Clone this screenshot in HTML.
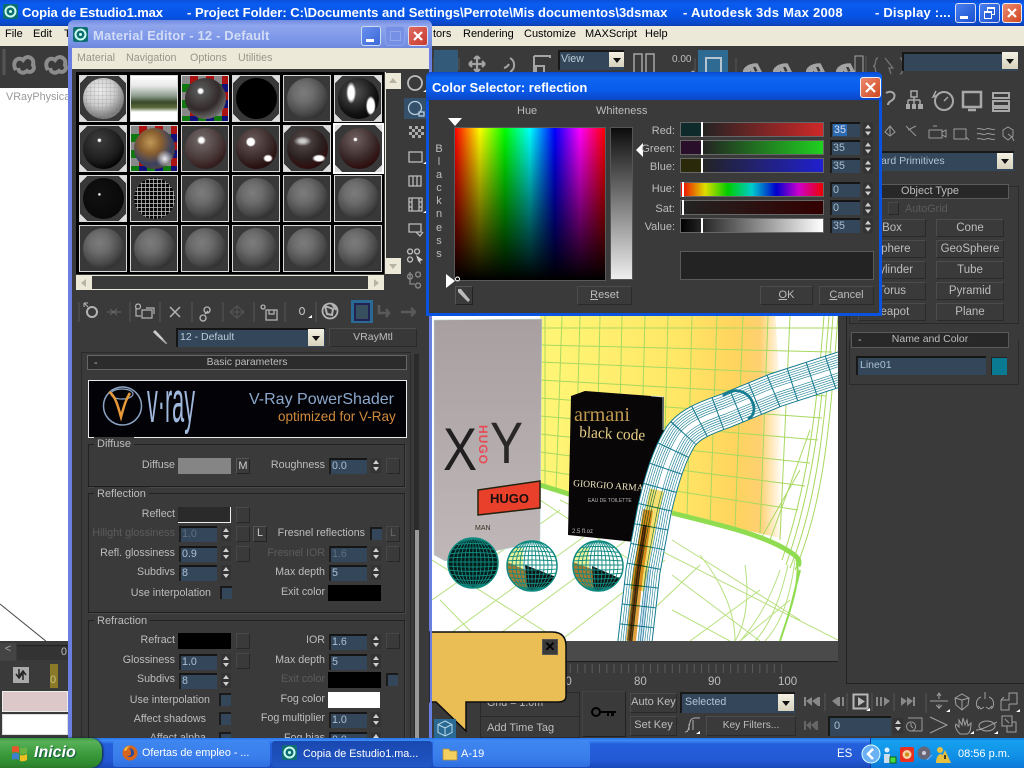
<!DOCTYPE html>
<html><head><meta charset="utf-8"><style>
html,body{margin:0;padding:0;width:1024px;height:768px;overflow:hidden;background:#3a3a3a}
body{position:relative;font-family:"Liberation Sans",sans-serif;font-size:10.7px;color:#bdbdbd}
.a,.t,.b,.i,.c,.s,.o,.g,.h{position:absolute;box-sizing:border-box}
.t{white-space:nowrap;line-height:14px}
.d{color:#5c5c5c}
.b{border:1px solid #2a2a2a;border-top-color:#4c4c4c;border-left-color:#4c4c4c;background:#3a3a3a;text-align:center;line-height:17px;white-space:nowrap;color:#bdbdbd}
.i{background:#34465a;border-top:2px solid #151515;border-left:2px solid #1c1c1c;color:#a8c0d4;padding-left:1px;line-height:13px;width:38px;height:16px}
.c{width:12px;height:13px;background:#34465a;border-top:2px solid #1a1a1a;border-left:2px solid #1a1a1a}
.s{width:14px;height:16px;border:1px solid #484848;border-right-color:#272727;border-bottom-color:#272727;background:#3a3a3a}
.g{border:1px solid #222;border-bottom-color:#1e1e1e;box-shadow:1px 1px 0 #484848}
.h{background:#282828;border:1px solid #5a5a5a;text-align:center;line-height:13px}
.o{width:48px;height:47px;background:#383838;border:1px solid #d8d8d8;overflow:hidden}
.o i{position:absolute;left:3px;top:2px;width:41px;height:41px;border-radius:50%;display:block;background:radial-gradient(circle at 40% 36%,#7c7c7c 0,#6c6c6c 28%,#4a4a4a 58%,#2c2c2c 78%,#464646 92%,#333 100%)}
.k{background:linear-gradient(135deg,#ddd 5px,transparent 5px),linear-gradient(225deg,#ddd 5px,transparent 5px),linear-gradient(45deg,#ddd 5px,transparent 5px),linear-gradient(315deg,#ddd 5px,transparent 5px),#383838}
.ar{background:linear-gradient(#f4f1e4,#d6d2bc)}
.ar:after{content:"";position:absolute;left:50%;top:50%;margin:-2px 0 0 -4px;border:4px solid transparent;border-top:5px solid #111;border-bottom:0}
.ck{background:conic-gradient(#a11 25%,#117 0 50%,#171 0 75%,#888 0) 0 0/16px 16px}
svg{position:absolute;overflow:visible}
</style></head><body>
<svg width="0" height="0" style="left:0;top:0"><defs>
<symbol id="sp" viewBox="0 0 10 15"><rect width="10" height="15" fill="#333"/><path d="M5 2l3 4H2zM5 13l3-4H2z" fill="#cfcfcf"/></symbol>
</defs></svg>

<!-- title bar -->
<div class="a" style="left:0;top:0;width:1024px;height:26px;background:linear-gradient(#0a4fd8,#0a5cf0 15%,#0654e6 60%,#0a48c8 90%,#0a3fb0)"></div>
<svg style="left:3px;top:3px" width="16" height="18"><rect x="0" y="1" width="15" height="15" rx="2" fill="#0d6e70"/><circle cx="7.500" cy="8.500" r="5" fill="none" stroke="#cfe" stroke-width="2"/><circle cx="7.500" cy="8.500" r="1.500" fill="#cfe"/></svg>
<div class="t" style="left:22px;top:5px;font:bold 13px/16px 'Liberation Sans';color:#fff;letter-spacing:-.1px">Copia de Estudio1.max</div>
<div class="t" style="left:187px;top:5px;font:bold 13px/16px 'Liberation Sans';color:#fff">- Project Folder: C:\Documents and Settings\Perrote\Mis documentos\3dsmax</div>
<div class="t" style="left:683px;top:5px;font:bold 13px/16px 'Liberation Sans';letter-spacing:.25px;color:#fff">- Autodesk 3ds Max 2008</div>
<div class="t" style="left:875px;top:5px;font:bold 13px/16px 'Liberation Sans';letter-spacing:.2px;color:#fff">- Display :...</div>
<div class="a" style="left:955px;top:3px;width:21px;height:20px;border:1px solid #dde;border-radius:3px;background:linear-gradient(135deg,#4a80ee,#1a50d0)"><div class="a" style="left:4px;top:12px;width:8px;height:3px;background:#fff"></div></div>
<div class="a" style="left:979px;top:3px;width:21px;height:20px;border:1px solid #dde;border-radius:3px;background:linear-gradient(135deg,#4a80ee,#1a50d0)"><div class="a" style="left:7px;top:3px;width:8px;height:8px;border:1px solid #fff;border-top-width:2px"></div><div class="a" style="left:4px;top:7px;width:8px;height:8px;border:1px solid #fff;border-top-width:2px;background:#2a60d8"></div></div>
<div class="a" style="left:1002px;top:3px;width:20px;height:20px;border:1px solid #eee;border-radius:3px;background:linear-gradient(135deg,#ec8a70,#d04820)"><svg style="left:3px;top:3px" width="12" height="12"><path d="M2 2l8 8M10 2l-8 8" stroke="#fff" stroke-width="2.200"/></svg></div>

<!-- menu bar -->
<div class="a" style="left:0;top:26px;width:1024px;height:20px;background:#ece9d8"></div>
<div class="t" style="left:5px;top:27px;color:#000;font-size:11px">File</div>
<div class="t" style="left:33px;top:27px;color:#000;font-size:11px">Edit</div>
<div class="t" style="left:64px;top:27px;color:#000;font-size:11px">T</div>
<div class="t" style="left:433px;top:27px;color:#000;font-size:11px">tors</div>
<div class="t" style="left:463px;top:27px;color:#000;font-size:11px">Rendering</div>
<div class="t" style="left:524px;top:27px;color:#000;font-size:11px">Customize</div>
<div class="t" style="left:585px;top:27px;color:#000;font-size:11px">MAXScript</div>
<div class="t" style="left:645px;top:27px;color:#000;font-size:11px">Help</div>

<!-- top toolbar -->
<div class="a" style="left:0;top:46px;width:1024px;height:42px;background:#3a3a3a"></div>
<svg style="left:0;top:46px" width="1024" height="40" fill="none" stroke="#a4a4a4" stroke-width="2">
<path d="M4 3v26" stroke="#555" stroke-width="3"/>
<g stroke-width="4" stroke="#8c8c8c"><path d="M16 24c-5-8 2-14 7-10 4-6 12-2 10 5 3 4-2 9-6 6-4 3-8 2-9-3"/><path d="M48 24c-5-8 2-14 7-10 4-6 12-2 10 5 3 4-2 9-6 6-4 3-8 2-9-3"/></g>
<path d="M477 10v16M469 18h16M477 10l-3 3M477 10l3 3M477 26l-3-3M477 26l3-3M469 18l3-3M469 18l3 3M485 18l-3-3M485 18l-3 3" stroke-width="2.200"/>
<path d="M510 12a8 8 0 0 1 0 14M504 22a8 8 0 0 0 5-4" stroke-width="2"/>
<path d="M534 10h16v2M534 10v20h6M536 20h8v8h-8z"/>
<path d="M634 8h8v22h-8zM646 8h8v22h-8z" stroke-width="1.500"/>
<path d="M673 27h5M678 27h12M690 27l3-2 3 2-3 2z" stroke-width="1"/>
<path d="M745 28c-2-5 4-9 12-9M756 18l4 8-6 2-2-5c-2 0-4 1-4 3l3 3-5 2" stroke-width="3.500"/>
<path d="M775 28c-2-5 4-9 12-9M786 18l4 8-6 2-2-5c-2 0-4 1-4 3l3 3-5 2" stroke-width="3.500"/>
<path d="M808 28c-2-5 4-9 12-9M819 18l4 8-6 2-2-5c-2 0-4 1-4 3l3 3-5 2" stroke-width="3.500"/>
<path d="M838 28c-2-5 4-9 12-9M849 18l4 8-6 2-2-5c-2 0-4 1-4 3l3 3-5 2" stroke-width="3.500"/>
<path d="M855 10h8v18h-8z" stroke-width="1"/>
<path d="M878 12c-4 0-1 8-5 8 4 0 1 8 5 8M900 12c4 0 1 8 5 8-4 0-1 8-5 8M885 12l8 10-4 0 2 6" stroke-width="1.200" stroke="#777"/>
<path d="M459 12v12M434 12v14M695 12v14M736 12v14M866 10v20" stroke="#555" stroke-width="1"/>
</svg>
<div class="a" style="left:434px;top:50px;width:24px;height:25px;background:#345a7a"></div>
<div class="a" style="left:558px;top:50px;width:66px;height:20px;background:#34465a;border-top:2px solid #181818;border-left:2px solid #181818;padding-left:1px;line-height:14px;color:#b8ccd8">View</div>
<div class="a ar" style="left:609px;top:52px;width:15px;height:15px"></div>
<div class="t" style="left:672px;top:53px;font-size:10px">0.00</div>
<div class="a" style="left:698px;top:50px;width:30px;height:25px;background:#2f6a92"></div>
<div class="a" style="left:705px;top:57px;width:17px;height:18px;border:2px solid #b4c4d0"></div>
<div class="a" style="left:902px;top:52px;width:116px;height:19px;background:#34465a;border-top:2px solid #181818;border-left:2px solid #181818"></div>
<div class="a ar" style="left:1002px;top:52px;width:16px;height:17px"></div>

<!-- left viewport -->
<div class="a" style="left:0;top:88px;width:68px;height:553px;background:#fff"></div>
<div class="t" style="left:6px;top:90px;color:#999;font-size:10.800px">VRayPhysica</div>
<svg style="left:0;top:600px" width="68" height="45"><path d="M0 4L47 42" stroke="#444" stroke-width="1" fill="none"/></svg>
<div class="a" style="left:0;top:643px;width:16px;height:18px;background:#444;color:#aaa;text-align:center">&lt;</div>
<div class="a" style="left:17px;top:645px;width:51px;height:15px;background:#333;border-top:1px solid #222"></div>
<div class="t" style="left:61px;top:645px">0</div>
<div class="a" style="left:13px;top:667px;width:16px;height:16px;background:#aaa"></div>
<svg style="left:15px;top:668px" width="12" height="13"><path d="M4 1v8M1 6l3 4 3-4M8 12V4M5 7l3-4 3 4" stroke="#222" stroke-width="1.500" fill="none"/></svg>
<div class="a" style="left:50px;top:664px;width:8px;height:24px;background:#8a7a28"></div>
<div class="t" style="left:50px;top:673px;color:#c8c080;font-size:11px">0</div>
<div class="a" style="left:2px;top:691px;width:66px;height:21px;background:#dcc8c8;border:1px solid #eee"></div>
<div class="a" style="left:2px;top:714px;width:66px;height:21px;background:#fff;border:1px solid #ddd"></div>

<!-- scene -->
<div class="a" style="left:432px;top:300px;width:406px;height:341px;background:#fff;overflow:hidden">
<svg style="left:0;top:0" width="406" height="341" viewBox="432 300 406 341">
<defs>
<linearGradient id="wl" x1="0" x2="1" y1="0" y2="0"><stop offset="0" stop-color="#fff676"/><stop offset=".55" stop-color="#ffe766"/><stop offset=".78" stop-color="#ffd45e"/><stop offset=".88" stop-color="#ffd070"/><stop offset=".97" stop-color="#fff"/></linearGradient>
<linearGradient id="bx" x1="0" x2="0" y1="0" y2="1"><stop offset="0" stop-color="#a8a0a0"/><stop offset="1" stop-color="#c0b8b8"/></linearGradient>
<clipPath id="s1"><circle cx="473" cy="563" r="25"/></clipPath>
<clipPath id="s2"><circle cx="532" cy="566" r="25"/></clipPath>
<clipPath id="s3"><circle cx="598" cy="566" r="25"/></clipPath>
<g id="wire" fill="none" stroke="#108a80" stroke-width=".9">
<path d="M-26-21Q0-27 26-21M-26-17Q0-22 26-17M-26-13Q0-17 26-13M-26-9Q0-12 26-9M-26-5Q0-7 26-5M-26-1H26M-26 3Q0 5 26 3M-26 7Q0 10 26 7M-26 11Q0 15 26 11M-26 15Q0 20 26 15M-26 19Q0 25 26 19"/>
<ellipse rx="4" ry="25"/><ellipse rx="8" ry="25"/><ellipse rx="12" ry="25"/><ellipse rx="16" ry="25"/><ellipse rx="20" ry="25"/><path d="M0-25V25"/>
</g>
</defs>
<path d="M540 310H775L790 540 540 485Z" fill="url(#wl)"/>
<g fill="none" stroke="#a8d860" stroke-width="1">
<path d="M545 316V488M562 316L556 491M580 316L575 495M600 316L596 500M622 316L618 504M645 316L640 508M668 316L663 513M692 316L687 518M717 316L710 524M743 316L735 528M768 316L760 534M790 316L780 540"/>
<path d="M540 328H838M540 345L832 352M540 362L832 375M540 380L826 396M540 398L822 418M540 416L818 440M540 434L810 463M540 452L805 486M540 470L798 510"/>
<path d="M838 316C830 420 825 500 795 570M833 316C825 420 818 500 790 568M829 316C821 420 812 490 786 565M824 316C816 420 806 490 782 560"/>
<path d="M800 470L760 540M810 430L770 540"/>
</g>
<path d="M540 485L572 495M672 513C720 525 765 535 790 552C800 558 800 562 798 566" fill="none" stroke="#90dc50" stroke-width="5"/>
<g fill="none" stroke="#b8e080" stroke-width="1">
<path d="M432 600L560 510M440 641L600 525M490 641L640 530M560 641L665 560M620 641L700 565M690 641L760 590M740 641L790 600"/>
<path d="M540 500L630 560M560 500L838 640M672 540L800 620M672 575L760 641M672 610L730 641M440 600L480 641M432 560L560 641"/>
<path d="M795 560C790 600 780 625 765 641M788 565C780 600 770 625 755 641M780 570C770 600 755 625 740 641M745 565C750 600 745 625 735 641M700 555C720 580 735 610 735 641"/>
</g>
<path d="M800 570L790 610M796 555C802 580 790 610 780 641" fill="none" stroke="#90dc50" stroke-width="2"/>
<path d="M434 320L542 319 540 542 445 561 434 555Z" fill="url(#bx)" stroke="#b8e0e0" stroke-width=".5"/>
<text x="443" y="470" font-family="Liberation Sans" font-size="60" fill="#211f1f" textLength="34" lengthAdjust="spacingAndGlyphs">X</text>
<text x="490" y="463" font-family="Liberation Sans" font-size="58" fill="#2a2727" textLength="33" lengthAdjust="spacingAndGlyphs">Y</text>
<text x="0" y="0" transform="translate(479,425) rotate(90)" font-family="Liberation Sans" font-weight="bold" font-size="12" letter-spacing="1" fill="#e84a55">HUGO</text>
<path d="M478 490L540 481V508L478 515Z" fill="#e8402a" stroke="#221" stroke-width="1.500"/>
<text x="490" y="503" font-family="Liberation Sans" font-weight="bold" font-size="13" fill="#1a1010">HUGO</text>
<text x="475" y="530" font-family="Liberation Sans" font-size="7" fill="#332">MAN</text>
<path d="M571 396L585 391 664 397 663 545 568 535Z" fill="#080606"/>
<path d="M651 396L663 397 663 430" stroke="#bde" fill="none" stroke-width=".8"/>
<text x="574" y="421" font-family="Liberation Serif" font-size="20" fill="#c09a50" textLength="56" lengthAdjust="spacingAndGlyphs">armani</text>
<text x="579" y="437" font-family="Liberation Serif" font-size="16" fill="#e8d088" transform="rotate(3 579 437)" textLength="66" lengthAdjust="spacingAndGlyphs">black code</text>
<text x="573" y="486" font-family="Liberation Serif" font-size="9.500" fill="#f0e8c0" transform="rotate(4 573 486)">GIORGIO ARMANI</text>
<text x="588" y="502" font-family="Liberation Sans" font-size="5" fill="#bbb">EAU DE TOILETTE</text>
<text x="572" y="533" font-family="Liberation Sans" font-size="6" fill="#bbb">2.5 fl.oz</text>
<!-- tube -->
<g fill="none">
<path d="M850 366L776 390L725 411C705 418 690 424 681 436C668 456 660 485 654 512L643 571L634 650" stroke="#127a8e" stroke-width="35"/>
<path d="M850 366L776 390L725 411C705 418 690 424 681 436C668 456 660 485 654 512L643 571L634 650" stroke="#fff" stroke-width="33"/>
<path d="M850 366L776 390L725 411C705 418 690 424 681 436C668 456 660 485 654 512L643 571L634 650" stroke="#127a8e" stroke-width="29"/>
<path d="M850 366L776 390L725 411C705 418 690 424 681 436C668 456 660 485 654 512L643 571L634 650" stroke="#fff" stroke-width="27.800"/>
<path d="M850 366L776 390L725 411C705 418 690 424 681 436C668 456 660 485 654 512L643 571L634 650" stroke="#127a8e" stroke-width="24.500"/>
<path d="M850 366L776 390L725 411C705 418 690 424 681 436C668 456 660 485 654 512L643 571L634 650" stroke="#fff" stroke-width="23.300"/>
<path d="M850 366L776 390L725 411C705 418 690 424 681 436C668 456 660 485 654 512L643 571L634 650" stroke="#127a8e" stroke-width="20"/>
<path d="M850 366L776 390L725 411C705 418 690 424 681 436C668 456 660 485 654 512L643 571L634 650" stroke="#fff" stroke-width="18.800"/>
<path d="M850 366L776 390L725 411C705 418 690 424 681 436C668 456 660 485 654 512L643 571L634 650" stroke="#127a8e" stroke-width="15.500"/>
<path d="M850 366L776 390L725 411C705 418 690 424 681 436C668 456 660 485 654 512L643 571L634 650" stroke="#fff" stroke-width="14.300"/>
<path d="M850 366L776 390L725 411C705 418 690 424 681 436C668 456 660 485 654 512L643 571L634 650" stroke="#127a8e" stroke-width="11"/>
<path d="M850 366L776 390L725 411C705 418 690 424 681 436C668 456 660 485 654 512L643 571L634 650" stroke="#fff" stroke-width="9.800"/>
<path d="M850 366L776 390L725 411C705 418 690 424 681 436C668 456 660 485 654 512L643 571L634 650" stroke="#127a8e" stroke-width="6.500"/>
<path d="M850 366L776 390L725 411C705 418 690 424 681 436C668 456 660 485 654 512L643 571L634 650" stroke="#fff" stroke-width="5.300"/>
<path d="M850 366L776 390L725 411C705 418 690 424 681 436C668 456 660 485 654 512L643 571L634 650" stroke="#127a8e" stroke-width="34" stroke-dasharray="1 19"/>
<path d="M657 490L648 530L637 590" stroke="#f4e070" stroke-width="14" style="mix-blend-mode:multiply"/>
<path d="M648 510L638 575L631 641" stroke="#e0a040" stroke-width="10" style="mix-blend-mode:multiply"/>
<path d="M645 525L637 580L630 641" stroke="#7a5a30" stroke-width="4" style="mix-blend-mode:multiply"/>
<path d="M648 570L641 641" stroke="#c8e0f0" stroke-width="5" style="mix-blend-mode:multiply"/>
</g>
<path d="M723 396C735 385 752 392 754 408C754 414 752 417 748 419" fill="none" stroke="#157d90" stroke-width="2.800"/>
<!-- spheres -->
<circle cx="473" cy="563" r="25.500" fill="#041c1a"/>
<g clip-path="url(#s1)"><use href="#wire" x="473" y="563"/></g>
<circle cx="473" cy="563" r="25" fill="none" stroke="#108a80" stroke-width="1.500"/>
<g clip-path="url(#s2)"><rect x="505" y="540" width="54" height="54" fill="#fff"/><rect x="507" y="548" width="16" height="24" fill="#e8f080" opacity=".8"/><path d="M507 562L530 572 548 592H507Z" fill="#a87a30"/><path d="M525 565L559 578V594H528Z" fill="#111"/><use href="#wire" x="532" y="566"/></g>
<circle cx="532" cy="566" r="25" fill="none" stroke="#108a80" stroke-width="1.500"/>
<g clip-path="url(#s3)"><rect x="570" y="540" width="54" height="54" fill="#fff"/><rect x="573" y="548" width="16" height="24" fill="#e8f080" opacity=".8"/><path d="M573 562L600 572 620 592H575Z" fill="#a87a30"/><path d="M592 566L624 580V594H594Z" fill="#111"/><use href="#wire" x="598" y="566"/></g>
<circle cx="598" cy="566" r="25" fill="none" stroke="#108a80" stroke-width="1.500"/>
</svg></div>
<div class="a" style="left:838px;top:88px;width:7px;height:560px;background:#3a3a3a"></div>

<!-- bottom of view: timeline -->
<div class="a" style="left:432px;top:641px;width:406px;height:21px;background:#4a4a4a;border-bottom:1px solid #1e1e1e"></div>
<div class="a" style="left:432px;top:662px;width:412px;height:77px;background:#3a3a3a"></div>
<svg style="left:560px;top:663px" width="240" height="14"><path d="M3 1v9M10.300 1v9M17.600 1v9M25 1v9M32.200 1v9M39.500 1v9M46.800 1v9M54 1v9M61.300 1v9M68.600 1v9M76 1v9M83.200 1v9M90.500 1v9M97.800 1v9M105 1v9M112.300 1v9M119.600 1v9M127 1v9M134.200 1v9M141.500 1v9M148.800 1v9M156 1v9M163.300 1v9M170.600 1v9M178 1v9M185.200 1v9M192.500 1v9M199.800 1v9M207 1v9M214.300 1v9M221.600 1v9" stroke="#5a5a5a" fill="none"/></svg>
<div class="t" style="left:559px;top:675px;font-size:11.500px">70</div>
<div class="t" style="left:634px;top:675px;font-size:11.500px">80</div>
<div class="t" style="left:708px;top:675px;font-size:11.500px">90</div>
<div class="t" style="left:778px;top:675px;font-size:11.500px">100</div>

<div class="a" style="left:480px;top:692px;width:100px;height:46px;background:#3a3a3a;border:1px solid #2a2a2a"></div>
<div class="t" style="left:487px;top:696px">Grid = 1.0m</div>
<div class="a" style="left:481px;top:716px;width:98px;height:1px;background:#2a2a2a"></div>
<div class="t" style="left:487px;top:721px;font-size:11px">Add Time Tag</div>
<div class="b" style="left:582px;top:691px;width:44px;height:46px;border-color:#444 #222 #222 #444"></div>
<svg style="left:591px;top:705px" width="28" height="14"><circle cx="5" cy="7" r="4" fill="none" stroke="#000" stroke-width="2"/><path d="M9 6h16v2h-2v3h-3V8h-2v3h-2V8H9z" fill="#000"/></svg>
<div class="b" style="left:630px;top:693px;width:47px;height:20px;font-size:11px">Auto Key</div>
<div class="b" style="left:630px;top:716px;width:47px;height:20px;font-size:11px">Set Key</div>
<div class="a" style="left:680px;top:692px;width:115px;height:21px;background:#34465a;border-top:2px solid #181818;border-left:2px solid #181818;padding-left:3px;line-height:16px;color:#b0c4d4;font-size:10.600px">Selected</div>
<div class="a ar" style="left:778px;top:694px;width:16px;height:17px"></div>
<div class="b" style="left:706px;top:716px;width:90px;height:20px;font-size:10.200px">Key Filters...</div>
<svg style="left:682px;top:716px" width="22" height="20" fill="none" stroke="#b0b0b0"><path d="M3 16c3 0 3-1 5-10 1-5 6-4 10-4"/><path d="M7 14V8M11 14V4" stroke-width="1"/><path d="M14 18l4-3v3z" fill="#fff" stroke="none"/></svg>

<!-- transport -->
<svg style="left:800px;top:690px" width="224" height="48" fill="#7c7c7c" stroke="none">
<path d="M4 7h2v9H4zM6 11l6-4v9zM12 11l6-4v9zM18 7h2v9h-2z" fill="#888"/>
<path d="M32 11l6-4v9zM38 7h2v9h-2zM42 7h2v9h-2z" fill="#888"/>
<rect x="53.500" y="4.500" width="14" height="14" fill="none" stroke="#b8b8b8" stroke-width="2"/><path d="M58 7l7 4.500-7 4.500z" fill="#b8b8b8"/><path d="M66 21l4-3v3z" fill="#fff"/>
<path d="M76 7h2v9h-2zM80 7h2v9h-2zM84 7l6 4-6 5z" fill="#888"/>
<path d="M101 7l6 4-6 5zM107 7l6 4-6 5zM113 7h2v9h-2z" fill="#888"/>
<path d="M4 31h2v9H4zM6 35l5-4v9zM11 35l5-4v9zM16 31h2v9h-2z" fill="#666"/>
<g fill="none" stroke="#a0a0a0"><path d="M126 3v20M25 3v18M47 3v18M72 3v18M94 3v18" stroke="#555"/>
<path d="M130 11h18M139 3v6M137 6l2-3 2 3M139 14v5M136 15l3 3 3-3"/><path d="M146 22l4-3v3z" fill="#fff" stroke="none"/>
<path d="M155 8l7-4 7 4-1 7-6 5-6-5zM162 10l-7-2M162 10l7-2M162 10v10"/>
<path d="M181 7a7 7 0 0 0-2 12M189 7a7 7 0 0 1 2 12M185 2v7M178 16l3 3 3-2M192 16l-3 3-3-2"/>
<path d="M201 10h8v-7h8v11h-8M201 10v10h8v-6M201 10l3-3"/><path d="M216 22l4-3v3z" fill="#fff" stroke="none"/>
<path d="M108 28h14v13h-11M111 32a4.500 4.500 0 1 0 .1 0M111 33v3l2 2" stroke="#999"/>
<path d="M130 27l17 8-17 8"/>
<path d="M160 44c-5-5-5-9-4-10l3 3v-7l3 5 1-7 2 7 2-5 1 6 3-3c0 6-1 10-4 11z"/><path d="M170 44l4-3v3z" fill="#fff" stroke="none"/>
<path d="M179 36a8 5 0 1 0 16 0a8 5 0 1 0-16 0M176 40c6 0 14-5 21-8"/><path d="M194 44l4-3v3z" fill="#fff" stroke="none"/>
<path d="M202 26h10v10h-10zM207 36v6h9V32h-4M205 29l4 4"/></g>
</svg>
<div class="a" style="left:828px;top:716px;width:63px;height:20px;background:#34465a;border-top:2px solid #181818;border-left:2px solid #181818;padding-left:4px;line-height:16px;color:#a8c0d4;font-size:11px">0</div>
<svg style="left:893px;top:717px" width="10" height="17"><use href="#sp"/></svg>

<!-- right panel -->
<div class="a" style="left:845px;top:88px;width:179px;height:560px;background:#3a3a3a"></div>
<div class="a" style="left:846px;top:95px;width:1px;height:588px;background:#222"></div>
<div class="a" style="left:846px;top:683px;width:178px;height:1px;background:#222"></div>
<svg style="left:880px;top:88px" width="144" height="60" fill="none" stroke="#a8a8a8" stroke-width="2">
<path d="M6 5c5-3 10 0 8 5-1 3-6 3-6 7"/>
<path d="M31 3h6v6h-6zM34 9v3M28 12h12M28 12v4M34 12v4M40 12v4" stroke-width="1.500"/><path d="M26 16h4v5h-4zM32 16h4v5h-4zM38 16h5v5h-5z" fill="#a8a8a8" stroke="none"/>
<circle cx="64" cy="13" r="9"/><path d="M58 7l-5 2 3-6M64 13l4-4" stroke-width="1.500"/>
<path d="M83 4h18v15H83zM88 22h8" stroke-width="2.500"/>
<path d="M113 5h16v5h-16zM113 13h16v5h-16zM113 20h16v3h-16z"/>
<g stroke-width="1" stroke="#999"><path d="M10 38l-5 6 5 4 5-4zM10 38v10"/><path d="M26 38l10 10M36 38l-8 4"/><path d="M49 42h13v8H49zM62 44l4-2v7l-4-2M53 38h4"/><path d="M74 41h12v10H74zM86 49l3 3"/><path d="M97 41c3-2 6 2 9 0s6 2 9 0M97 46c3-2 6 2 9 0s6 2 9 0M97 51c3-2 6 2 9 0s6 2 9 0"/><path d="M123 42l5-3 5 3v6l-5 4-5-4zM128 46l4 3 2 4"/></g>
</svg>
<div class="a" style="left:880px;top:151px;width:134px;height:20px;background:#34465a;border-top:2px solid #181818;padding-left:1px;line-height:17px;color:#b0c4d4;font-size:10.500px">ard Primitives</div>
<div class="a ar" style="left:997px;top:153px;width:16px;height:16px"></div>
<div class="a" style="left:849px;top:186px;width:170px;height:138px;border:1px solid #2a2a2a"></div>
<div class="h" style="left:851px;top:184px;width:158px;height:15px;font-size:10.900px">Object Type</div>
<div class="t d" style="left:905px;top:202px;font-size:10.800px">AutoGrid</div>
<div class="s" style="left:888px;top:202px;width:11px;height:13px"></div>
<div class="b" style="left:858px;top:219px;width:68px;height:18px;font-size:11.500px">Box</div><div class="b" style="left:936px;top:219px;width:68px;height:18px;font-size:11.500px">Cone</div>
<div class="b" style="left:858px;top:240px;width:68px;height:18px;font-size:11.500px">Sphere</div><div class="b" style="left:936px;top:240px;width:68px;height:18px;font-size:11.500px">GeoSphere</div>
<div class="b" style="left:858px;top:261px;width:68px;height:18px;font-size:11.500px">Cylinder</div><div class="b" style="left:936px;top:261px;width:68px;height:18px;font-size:11.500px">Tube</div>
<div class="b" style="left:858px;top:282px;width:68px;height:18px;font-size:11.500px">Torus</div><div class="b" style="left:936px;top:282px;width:68px;height:18px;font-size:11.500px">Pyramid</div>
<div class="b" style="left:858px;top:303px;width:68px;height:18px;font-size:11.500px">Teapot</div><div class="b" style="left:936px;top:303px;width:68px;height:18px;font-size:11.500px">Plane</div>
<div class="h" style="left:851px;top:332px;width:158px;height:16px;font-size:10.500px">Name and Color</div>
<div class="t" style="left:858px;top:333px">-</div>
<div class="a" style="left:849px;top:340px;width:170px;height:45px;border:1px solid #2a2a2a;border-top:0"></div>
<div class="a" style="left:856px;top:356px;width:130px;height:19px;background:#34465a;border-top:2px solid #151515;border-left:2px solid #181818;padding-left:2px;line-height:15px;color:#a8c0d4;font-size:10.500px">Line01</div>
<div class="a" style="left:991px;top:357px;width:16px;height:18px;background:#0a7a93;border-top:1px solid #222;border-left:1px solid #222"></div>

<!-- MATERIAL EDITOR -->
<div class="a" style="left:68px;top:20px;width:364px;height:720px;background:#6a7fe0;border-radius:6px 6px 0 0"></div>
<div class="a" style="left:68px;top:20px;width:364px;height:28px;background:linear-gradient(#6f8ae0,#8fa5ec 20%,#7b96e8 70%,#7088dc);border-radius:6px 6px 0 0"></div>
<div class="a" style="left:72px;top:48px;width:357px;height:692px;background:#3a3a3a"></div>
<div class="a" style="left:72px;top:48px;width:357px;height:21px;background:#ece9d8"></div>
<svg style="left:73px;top:27px" width="16" height="18"><rect x="0" y="0" width="15" height="15" rx="2" fill="#0e6e72"/><circle cx="7.500" cy="7.500" r="5" fill="none" stroke="#cfe" stroke-width="2"/><circle cx="7.500" cy="7.500" r="1.500" fill="#cfe"/></svg>
<div class="t" style="left:93px;top:28px;font:bold 13px/16px 'Liberation Sans';letter-spacing:.15px;color:#d2dcf6">Material Editor - 12 - Default</div>
<div class="a" style="left:361px;top:26px;width:20px;height:20px;border:1px solid #cde;border-radius:3px;background:linear-gradient(135deg,#6a90ee,#3a68d8)"><div class="a" style="left:4px;top:12px;width:8px;height:3px;background:#fff"></div></div>
<div class="a" style="left:385px;top:26px;width:20px;height:20px;border:1px solid #8aa0e8;border-radius:3px;background:#7590e4"><div class="a" style="left:4px;top:4px;width:11px;height:10px;border:1px solid #94a8ea"></div></div>
<div class="a" style="left:408px;top:26px;width:20px;height:20px;border:1px solid #dde;border-radius:3px;background:linear-gradient(135deg,#e06a60,#c83a30)"><svg style="left:3px;top:3px" width="12" height="12"><path d="M2 2l8 8M10 2l-8 8" stroke="#fff" stroke-width="2.200"/></svg></div>
<div class="t" style="left:77px;top:51px;color:#98968a">Material</div>
<div class="t" style="left:126px;top:51px;color:#98968a">Navigation</div>
<div class="t" style="left:190px;top:51px;color:#98968a">Options</div>
<div class="t" style="left:238px;top:51px;color:#98968a">Utilities</div>

<!-- slots -->
<div class="a" style="left:76px;top:72px;width:308px;height:202px;background:#000"></div>
<div class="o k" style="left:79px;top:75px"><i style="background:repeating-linear-gradient(0deg,transparent 0 3px,rgba(150,150,150,.25) 3px 4px),repeating-linear-gradient(90deg,transparent 0 3px,rgba(150,150,150,.25) 3px 4px),radial-gradient(circle at 42% 32%,#eee 0,#ccc 40%,#777 72%,#aaa 100%)"></i></div>
<div class="o k" style="left:130px;top:75px;background:linear-gradient(#fff 0,#e8e8e8 22%,#8a9a8a 45%,#3a4a2a 58%,#5a6a3a 70%,#fff 80%)"></div>
<div class="o ck" style="left:181px;top:75px"><i style="background:radial-gradient(circle at 38% 32%,#fff 0,#fff 5%,#555 10%,#332a2a 50%,#777 80%,#333 100%)"></i></div>
<div class="o k" style="left:232px;top:75px"><i style="background:#000"></i></div>
<div class="o" style="left:283px;top:75px"><i></i></div>
<div class="o k" style="left:334px;top:75px"><i style="background:radial-gradient(ellipse 5px 11px at 32% 36%,#fff 0,#fff 60%,transparent 100%),radial-gradient(ellipse 5px 10px at 80% 68%,#fff 0,#fff 70%,transparent 100%),radial-gradient(circle at 40% 35%,#555 0,#111 60%,#000 100%)"></i></div>

<div class="o k" style="left:79px;top:125px"><i style="background:radial-gradient(circle at 40% 30%,#fff 0,#fff 3%,#3a3a3a 6%,#1c1c1c 55%,#000 80%,#1a1a1a 100%)"></i></div>
<div class="o ck" style="left:130px;top:125px"><i style="background:radial-gradient(circle at 75% 75%,#eee 0,transparent 20%),radial-gradient(circle at 40% 35%,#c09858 0,#8a6030 30%,#3a4060 60%,#5a4a30 85%,#222 100%)"></i></div>
<div class="o" style="left:181px;top:125px"><i style="background:radial-gradient(circle at 40% 30%,#fff 0,#fff 6%,#6a6060 12%,#4a3a3a 50%,#382020 70%,#111 100%)"></i></div>
<div class="o" style="left:232px;top:125px"><i style="background:radial-gradient(ellipse 5px 5px at 36% 34%,#fff 70%,transparent),radial-gradient(ellipse 5px 4px at 78% 74%,#fff 60%,transparent),radial-gradient(circle at 40% 30%,#6a5a5a 0,#3a2a2a 50%,#2a1010 72%,#0a0a0a 100%)"></i></div>
<div class="o k" style="left:283px;top:125px"><i style="background:radial-gradient(ellipse 9px 5px at 38% 32%,#ccc 30%,transparent),radial-gradient(ellipse 7px 4px at 78% 74%,#fff 60%,transparent),radial-gradient(circle at 40% 30%,#5a5050 0,#2a2020 50%,#301010 70%,#000 100%)"></i></div>
<div class="o k" style="left:333px;top:123px;width:51px;height:51px;border:2px solid #fff"><i style="left:4px;top:3px;background:radial-gradient(circle at 40% 28%,#fff 0,#fff 3%,#6a5a5a 6%,#3a2a2a 50%,#301010 72%,#111 100%)"></i></div>

<div class="o k" style="left:79px;top:175px"><i style="background:radial-gradient(circle at 40% 40%,#fff 0,#fff 2%,#111 5%,#050505 100%)"></i></div>
<div class="o" style="left:130px;top:175px"><i style="background:repeating-linear-gradient(0deg,transparent 0 3px,rgba(200,200,200,.75) 3px 4px),repeating-linear-gradient(90deg,transparent 0 3px,rgba(200,200,200,.75) 3px 4px),#080808"></i></div>
<div class="o" style="left:181px;top:175px"><i></i></div><div class="o" style="left:232px;top:175px"><i></i></div><div class="o" style="left:283px;top:175px"><i></i></div><div class="o" style="left:334px;top:175px"><i></i></div>
<div class="o" style="left:79px;top:225px"><i></i></div><div class="o" style="left:130px;top:225px"><i></i></div><div class="o" style="left:181px;top:225px"><i></i></div><div class="o" style="left:232px;top:225px"><i></i></div><div class="o" style="left:283px;top:225px"><i></i></div><div class="o" style="left:334px;top:225px"><i></i></div>

<!-- scrollbars -->
<div class="a" style="left:385px;top:72px;width:16px;height:202px;background:#3a3a3a;border-left:1px solid #ece9d8"></div>
<div class="a" style="left:385px;top:73px;width:16px;height:16px;background:#ece9d8"></div>
<svg style="left:388px;top:77px" width="10" height="8"><path d="M5 1l4 5H1z" fill="#b8b4a2"/></svg>
<div class="a" style="left:385px;top:258px;width:16px;height:16px;background:#ece9d8"></div>
<svg style="left:388px;top:262px" width="10" height="8"><path d="M5 7l4-5H1z" fill="#b8b4a2"/></svg>
<div class="a" style="left:76px;top:275px;width:308px;height:15px;background:#3a3a3a;border-top:1px solid #ece9d8;border-bottom:1px solid #ece9d8"></div>
<div class="a" style="left:76px;top:275px;width:16px;height:15px;background:#ece9d8"></div>
<div class="a" style="left:368px;top:275px;width:16px;height:15px;background:#ece9d8"></div>
<svg style="left:80px;top:278px" width="8" height="10"><path d="M1 5l5-4v8z" fill="#b8b4a2"/></svg>
<svg style="left:372px;top:278px" width="8" height="10"><path d="M7 5L2 1v8z" fill="#b8b4a2"/></svg>

<!-- mat side icons -->
<div class="a" style="left:404px;top:98px;width:22px;height:21px;background:#34506a"></div>
<svg style="left:404px;top:72px" width="24" height="222" fill="none" stroke="#bcbcbc" stroke-width="1.300">
<circle cx="11" cy="11" r="7" stroke-width="1.800"/><path d="M19 20l4-3v3z" fill="#fff" stroke="none"/>
<circle cx="11" cy="36" r="6.500" stroke="#b8cfe0"/><rect x="15" y="40" width="5" height="4" stroke="#b8cfe0"/>
<path d="M5 54h3v3H5zM11 54h3v3h-3zM17 54h3v3h-3zM8 57h3v3H8zM14 57h3v3h-3zM5 60h3v3H5zM11 60h3v3h-3zM17 60h3v3h-3zM8 63h3v3H8zM14 63h3v3h-3z" fill="#aaa" stroke="none"/>
<rect x="5" y="80" width="13" height="10"/><path d="M19 92l4-3v3z" fill="#fff" stroke="none"/>
<path d="M5 104h12v10H5zM9 104v10M13 104v10" />
<path d="M5 126h13v13H5zM8 126v13M15 126v13M5 130h3M5 135h3M15 130h3M15 135h3"/><path d="M19 141l4-3v3z" fill="#fff" stroke="none"/>
<path d="M5 152h12v8H5zM12 160l4 4 3-4" />
<path d="M6 177a2.500 2.500 0 1 0 .1 0M13 177a2.500 2.500 0 1 0 .1 0M6 185a2.500 2.500 0 1 0 .1 0"/><path d="M12 183l7 5-3 1 1 3-3-3z" fill="#ccc" stroke="none"/>
<path d="M6 202a2.500 2.500 0 1 0 .1 0M14 200a2.500 2.500 0 1 0 .1 0M14 211a2.500 2.500 0 1 0 .1 0M6 200v12h5" stroke="#888"/>
</svg>

<!-- mat toolbar -->
<svg style="left:78px;top:300px" width="320" height="26" fill="none" stroke="#b4b4b4" stroke-width="1.500">
<path d="M1 2v20M52 2v20M82 2v20M114 2v20M145 2v20M176 2v20M207 2v20M238 2v20" stroke="#555" stroke-width="1"/>
<circle cx="14" cy="12" r="5" stroke-width="2"/><path d="M6 3l4 4M6 3v4M6 3h4" stroke-width="1"/>
<path d="M32 9l7 6M39 9l-7 6M29 12h14" stroke="#666" stroke-width="1"/>
<path d="M60 4a2.500 2.500 0 1 0 .1 0M58 8v8h5M64 10h10v8H64zM68 8h8v6" stroke-width="1.200"/>
<path d="M92 7l10 10M102 7L92 17"/>
<path d="M129 7a3 3 0 1 0 .1 0M125 15a3 3 0 1 0 .1 0M130 11l-3 3" stroke-width="1.300"/>
<path d="M152 12l7-6 7 6-7 6zM159 6v12M152 12h14" stroke="#585858" stroke-width="1"/>
<path d="M185 5a2 2 0 1 0 .1 0M188 10h11v10h-11zM191 10v4h5v-4" stroke-width="1.300"/>
<ellipse cx="224" cy="11" rx="2.500" ry="3.500" stroke-width="1.200"/><path d="M230 18l4-3v3z" fill="#fff" stroke="none"/>
<circle cx="252" cy="11" r="7.500" stroke-width="1.800"/><path d="M247 6l8 3-1 6-5-1zM254 4l4 6" stroke-width="2"/>
</svg>
<div class="a" style="left:351px;top:300px;width:22px;height:23px;background:#2a6a92"></div>
<div class="a" style="left:354px;top:303px;width:16px;height:18px;background:#38505e;border:2px solid #225"></div>
<svg style="left:377px;top:304px" width="46" height="14" fill="none" stroke="#5a5a5a" stroke-width="2.500"><path d="M2 1v8h10M9 5l3 4-3 4M24 8h14M34 4l4 4-4 4"/></svg>
<svg style="left:153px;top:329px" width="16" height="16"><path d="M2 1l4 4 8 9-1 1-9-8-4-4z" fill="#ccc"/><path d="M10 10l4 5" stroke="#888"/></svg>
<div class="a" style="left:176px;top:328px;width:149px;height:19px;background:#34465a;border-top:2px solid #151515;border-left:2px solid #151515;padding-left:2px;line-height:15px;color:#b8ccd8;font-size:10.500px">12 - Default</div>
<div class="a ar" style="left:308px;top:329px;width:16px;height:17px"></div>
<div class="b" style="left:329px;top:328px;width:88px;height:19px;font-size:10.500px;background:#383838">VRayMtl</div>

<!-- params -->
<div class="a" style="left:81px;top:352px;width:330px;height:1px;background:#2a2a2a"></div>
<div class="a" style="left:81px;top:352px;width:1px;height:390px;background:#2a2a2a"></div>
<div class="a" style="left:410px;top:355px;width:1px;height:390px;background:#2a2a2a"></div>
<div class="a" style="left:414px;top:354px;width:5px;height:390px;background:#2b2b2b"></div>
<div class="a" style="left:415px;top:530px;width:4px;height:210px;background:#9a9a9a"></div>
<div class="h" style="left:87px;top:355px;width:320px;height:15px;font-size:10.400px;border-color:#666;background:#2c2c2c">Basic parameters</div>
<div class="t" style="left:94px;top:356px">-</div>
<div class="a" style="left:88px;top:380px;width:319px;height:58px;background:#030307;border:1px solid #e8e8e8"></div>
<svg style="left:88px;top:380px" width="319" height="58" fill="none">
<circle cx="34.500" cy="26" r="19" stroke="#8ca4c4" stroke-width="1.500"/><ellipse cx="34" cy="14" rx="11" ry="5" stroke="#8ca4c4" stroke-width="1.200"/>
<path d="M21 12c6 3 9 14 12 25 3-11 5-18 9-24" stroke="#e89a3a" stroke-width="2.500"/>
<text x="59" y="42" font-family="Liberation Sans" font-size="58" fill="#a0b8dc" textLength="48" lengthAdjust="spacingAndGlyphs">v·ray</text>
<text x="161" y="24" font-family="Liberation Sans" font-size="16" fill="#8ca8cc">V-Ray PowerShader</text>
<text x="190" y="41" font-family="Liberation Sans" font-size="13.500" fill="#d08a3c">optimized for V-Ray</text>
</svg>

<!-- groups -->
<div class="g" style="left:88px;top:444px;width:317px;height:43px"></div><div class="t" style="left:94px;top:437px;background:#3a3a3a;padding:0 3px;font-size:11px">Diffuse</div>
<div class="t" style="right:849px;top:458px">Diffuse</div>
<div class="a" style="left:178px;top:458px;width:53px;height:16px;background:#858585"></div>
<div class="s" style="left:236px;top:458px;color:#ccc;text-align:center;line-height:14px;font-size:11px;border-color:#555 #222 #222 #555">M</div>
<div class="t" style="right:699px;top:458px">Roughness</div>
<div class="i" style="left:329px;top:458px">0.0</div><svg style="left:371px;top:458px" width="10" height="15"><use href="#sp"/></svg><div class="s" style="left:386px;top:458px"></div>

<div class="g" style="left:88px;top:493px;width:317px;height:120px"></div><div class="t" style="left:94px;top:487px;background:#3a3a3a;padding:0 3px;font-size:11px">Reflection</div>
<div class="t" style="right:849px;top:507px">Reflect</div>
<div class="a" style="left:178px;top:507px;width:53px;height:16px;background:#2a2a2a;border-right:1px solid #eee;border-bottom:1px solid #eee"></div><div class="s" style="left:236px;top:507px"></div>

<div class="t d" style="right:849px;top:526px">Hilight glossiness</div><div class="i" style="left:179px;top:526px;color:#5c7080">1.0</div><svg style="left:221px;top:526px" width="10" height="15"><use href="#sp"/></svg><div class="s" style="left:236px;top:526px"></div><div class="s" style="left:253px;top:526px;text-align:center;line-height:13px;color:#ccc;border-color:#555 #222 #222 #555">L</div>
<div class="t" style="right:659px;top:526px">Fresnel reflections</div><div class="c" style="left:370px;top:527px"></div><div class="s" style="left:386px;top:526px;text-align:center;line-height:13px;color:#666">L</div>

<div class="t" style="right:849px;top:546px">Refl. glossiness</div><div class="i" style="left:179px;top:546px">0.9</div><svg style="left:221px;top:546px" width="10" height="15"><use href="#sp"/></svg><div class="s" style="left:236px;top:546px"></div>
<div class="t d" style="right:699px;top:546px">Fresnel IOR</div><div class="i" style="left:329px;top:546px;color:#5c7080">1.6</div><svg style="left:371px;top:546px" width="10" height="15"><use href="#sp"/></svg><div class="s" style="left:386px;top:546px"></div>

<div class="t" style="right:849px;top:565px">Subdivs</div><div class="i" style="left:179px;top:565px">8</div><svg style="left:221px;top:565px" width="10" height="15"><use href="#sp"/></svg>
<div class="t" style="right:699px;top:565px">Max depth</div><div class="i" style="left:329px;top:565px">5</div><svg style="left:371px;top:565px" width="10" height="15"><use href="#sp"/></svg>

<div class="t" style="right:813px;top:586px">Use interpolation</div><div class="c" style="left:220px;top:586px"></div>
<div class="t" style="right:699px;top:585px">Exit color</div><div class="a" style="left:328px;top:585px;width:53px;height:16px;background:#000"></div>

<div class="g" style="left:88px;top:620px;width:317px;height:130px"></div><div class="t" style="left:94px;top:614px;background:#3a3a3a;padding:0 3px;font-size:11px">Refraction</div>
<div class="t" style="right:849px;top:633px">Refract</div><div class="a" style="left:178px;top:633px;width:53px;height:16px;background:#000"></div><div class="s" style="left:236px;top:633px"></div>
<div class="t" style="right:699px;top:633px">IOR</div><div class="i" style="left:329px;top:634px">1.6</div><svg style="left:371px;top:634px" width="10" height="15"><use href="#sp"/></svg><div class="s" style="left:386px;top:633px"></div>
<div class="t" style="right:849px;top:653px">Glossiness</div><div class="i" style="left:179px;top:654px">1.0</div><svg style="left:221px;top:654px" width="10" height="15"><use href="#sp"/></svg><div class="s" style="left:236px;top:653px"></div>
<div class="t" style="right:699px;top:653px">Max depth</div><div class="i" style="left:329px;top:654px">5</div><svg style="left:371px;top:654px" width="10" height="15"><use href="#sp"/></svg>
<div class="t" style="right:849px;top:672px">Subdivs</div><div class="i" style="left:179px;top:673px">8</div><svg style="left:221px;top:673px" width="10" height="15"><use href="#sp"/></svg>
<div class="t d" style="right:699px;top:672px">Exit color</div><div class="a" style="left:328px;top:672px;width:53px;height:16px;background:#000"></div><div class="c" style="left:386px;top:673px"></div>
<div class="t" style="right:814px;top:693px">Use interpolation</div><div class="c" style="left:219px;top:693px"></div>
<div class="t" style="right:699px;top:692px">Fog color</div><div class="a" style="left:328px;top:692px;width:52px;height:16px;background:#fff"></div>
<div class="t" style="right:818px;top:712px">Affect shadows</div><div class="c" style="left:219px;top:712px"></div>
<div class="t" style="right:699px;top:711px">Fog multiplier</div><div class="i" style="left:329px;top:712px">1.0</div><svg style="left:371px;top:712px" width="10" height="15"><use href="#sp"/></svg>
<div class="t" style="right:818px;top:731px">Affect alpha</div><div class="c" style="left:219px;top:732px"></div>
<div class="t" style="right:699px;top:731px">Fog bias</div><div class="i" style="left:329px;top:732px">0.0</div><svg style="left:371px;top:732px" width="10" height="15"><use href="#sp"/></svg>

<!-- COLOR SELECTOR -->
<div class="a" style="left:426px;top:72px;width:456px;height:244px;background:#0a52e0;border-radius:5px 5px 0 0"></div>
<div class="a" style="left:426px;top:72px;width:456px;height:29px;background:linear-gradient(#0a48d0,#0e66f2 20%,#0a5cec 60%,#0a44c4);border-radius:5px 5px 0 0"></div>
<div class="a" style="left:429px;top:100px;width:450px;height:213px;background:#3a3a3a"></div>
<div class="t" style="left:432px;top:80px;font:bold 13px/16px 'Liberation Sans';color:#fff">Color Selector: reflection</div>
<div class="a" style="left:860px;top:77px;width:21px;height:21px;border:1px solid #eee;border-radius:3px;background:linear-gradient(135deg,#ec8a70,#d04820)"><svg style="left:3px;top:3px" width="13" height="13"><path d="M2 2l9 9M11 2l-9 9" stroke="#fff" stroke-width="2.200"/></svg></div>
<div class="t" style="left:517px;top:104px;font-size:11px">Hue</div>
<div class="t" style="left:596px;top:104px;font-size:11px">Whiteness</div>
<div class="a" style="left:454px;top:127px;width:152px;height:154px;background:linear-gradient(transparent,#000),linear-gradient(90deg,#f00,#ff0 16.600%,#0f0 33.300%,#0ff 50%,#00f 66.600%,#f0f 83.300%,#f00);border:1px solid #5a5a5a"></div>
<svg style="left:447px;top:117px" width="16" height="10"><path d="M1 1h14l-7 8z" fill="#fff"/></svg>
<svg style="left:445px;top:273px" width="20" height="20"><path d="M1 1v14l9-7z" fill="#fff"/><circle cx="12.500" cy="6" r="2" fill="none" stroke="#fff"/></svg>
<div class="a" style="left:610px;top:127px;width:23px;height:153px;background:linear-gradient(#0c0c0c,#eee);border:1px solid #555"></div>
<svg style="left:635px;top:142px" width="9" height="16"><path d="M8 1v14l-7-7z" fill="#fff"/></svg>
<div class="t" style="left:434px;top:143px;width:10px;text-align:center;white-space:normal;line-height:13.100px;font-size:11px">B<br>l<br>a<br>c<br>k<br>n<br>e<br>s<br>s</div>
<div class="t" style="right:349px;top:124px;font-size:11px">Red:</div>
<div class="t" style="right:349px;top:142px;font-size:11px">Green:</div>
<div class="t" style="right:349px;top:160px;font-size:11px">Blue:</div>
<div class="t" style="right:349px;top:182px;font-size:11px">Hue:</div>
<div class="t" style="right:349px;top:202px;font-size:11px">Sat:</div>
<div class="t" style="right:349px;top:220px;font-size:11px">Value:</div>
<div class="a" style="left:680px;top:122px;width:144px;height:15px;background:linear-gradient(90deg,#232323 15%,#d02828);border:1px solid #666"></div>
<div class="a" style="left:681px;top:123px;width:20px;height:13px;background:#0f2a2a"></div>
<div class="a" style="left:680px;top:140px;width:144px;height:15px;background:linear-gradient(90deg,#232323 15%,#20d020);border:1px solid #666"></div>
<div class="a" style="left:681px;top:141px;width:20px;height:13px;background:#2a0f2a"></div>
<div class="a" style="left:680px;top:158px;width:144px;height:15px;background:linear-gradient(90deg,#232323 15%,#2020d0);border:1px solid #666"></div>
<div class="a" style="left:681px;top:159px;width:20px;height:13px;background:#2a2a0a"></div>
<div class="a" style="left:680px;top:182px;width:144px;height:15px;background:linear-gradient(90deg,#e00,#dd0 17%,#0c0 33%,#0cc 50%,#00c 67%,#c0c 83%,#e00);border:1px solid #666"></div>
<div class="a" style="left:680px;top:200px;width:144px;height:15px;background:linear-gradient(90deg,#232323,#300);border:1px solid #666"></div>
<div class="a" style="left:680px;top:218px;width:144px;height:15px;background:linear-gradient(90deg,#000,#fff);border:1px solid #666"></div>
<div class="a" style="left:701px;top:122px;width:2px;height:15px;background:#fff"></div>
<div class="a" style="left:701px;top:140px;width:2px;height:15px;background:#fff"></div>
<div class="a" style="left:701px;top:158px;width:2px;height:15px;background:#fff"></div>
<div class="a" style="left:682px;top:182px;width:2px;height:15px;background:#fff"></div>
<div class="a" style="left:682px;top:200px;width:2px;height:15px;background:#fff"></div>
<div class="a" style="left:701px;top:218px;width:2px;height:15px;background:#fff"></div>
<div class="i" style="left:830px;top:122px;width:30px;height:15px;color:#c8d8e8"><span style="background:#2a6ab0;color:#dde;padding:0 1px">35</span></div><svg style="left:863px;top:122px" width="10" height="16"><use href="#sp"/></svg>
<div class="i" style="left:830px;top:140px;width:30px;height:15px">35</div><svg style="left:863px;top:140px" width="10" height="16"><use href="#sp"/></svg>
<div class="i" style="left:830px;top:158px;width:30px;height:15px">35</div><svg style="left:863px;top:158px" width="10" height="16"><use href="#sp"/></svg>
<div class="i" style="left:830px;top:182px;width:30px;height:15px">0</div><svg style="left:863px;top:182px" width="10" height="16"><use href="#sp"/></svg>
<div class="i" style="left:830px;top:200px;width:30px;height:15px">0</div><svg style="left:863px;top:200px" width="10" height="16"><use href="#sp"/></svg>
<div class="i" style="left:830px;top:218px;width:30px;height:15px">35</div><svg style="left:863px;top:218px" width="10" height="16"><use href="#sp"/></svg>
<div class="a" style="left:680px;top:251px;width:194px;height:29px;background:#232323;border:1px solid #5a5a5a"></div>
<div class="b" style="left:455px;top:286px;width:18px;height:19px;border-color:#555 #222 #222 #555"></div>
<svg style="left:457px;top:288px" width="14" height="15"><path d="M1 1l3 0 9 11-2 2L1 4z" fill="#bbb"/></svg>
<div class="b" style="left:577px;top:286px;width:55px;height:19px;font-size:11px"><u>R</u>eset</div>
<div class="b" style="left:760px;top:286px;width:53px;height:19px;font-size:11px"><u>O</u>K</div>
<div class="b" style="left:819px;top:286px;width:55px;height:19px;font-size:11px"><u>C</u>ancel</div>

<!-- bubble -->
<svg style="left:432px;top:631px" width="136" height="102"><path d="M-2 1H120Q134 1 134 15V65Q134 71 126 71H34V100L4 71H-2Z" fill="#ebbd55" stroke="#0c0c0c" stroke-width="1.500"/></svg>
<div class="a" style="left:430px;top:628px;width:2px;height:80px;background:#6a7fe0"></div>
<div class="a" style="left:542px;top:639px;width:16px;height:16px;background:#3a3a3a;border:1px solid #555;color:#000;font:bold 13px/14px 'Liberation Sans';text-align:center">&#10005;</div>
<div class="a" style="left:434px;top:719px;width:22px;height:19px;background:#2a6a92"></div>
<svg style="left:436px;top:720px" width="18" height="18" fill="none" stroke="#b8d8e8"><path d="M9 1l7 3.500v8L9 16l-7-3.500v-8zM9 8l7-3.500M9 8L2 4.500M9 8v8"/></svg>

<!-- taskbar -->
<div class="a" style="left:0;top:738px;width:1024px;height:30px;background:linear-gradient(#2a70e8 0,#3d8cf5 8%,#2460dc 20%,#2358d4 75%,#1a48b8 100%)"></div>
<div class="a" style="left:0;top:738px;width:102px;height:30px;background:linear-gradient(#3e9a3e,#58b058 12%,#3d9c3d 50%,#2f8a2f 85%,#2a7a2a);border-radius:0 12px 12px 0;box-shadow:1px 0 2px #123"></div>
<svg style="left:11px;top:745px" width="18" height="17"><path d="M1 2q4-2 7 0v6q-3-2-7 0z" fill="#e8552a"/><path d="M9 3q4 1 7-1v6q-3 2-7 1z" fill="#6db33f"/><path d="M1 9q4-2 7 0v6q-3-2-7 0z" fill="#3f7fd0"/><path d="M9 10q4 1 7-1v6q-3 2-7 1z" fill="#f0c020"/></svg>
<div class="t" style="left:34px;top:744px;font:italic bold 16px/18px 'Liberation Sans';color:#fff;text-shadow:1px 1px 1px #154">Inicio</div>
<div class="a" style="left:113px;top:741px;width:157px;height:26px;background:linear-gradient(#3e86f0,#3a7eec 60%,#2f6fe0);border-radius:3px"></div>
<svg style="left:121px;top:744px" width="18" height="18"><circle cx="9" cy="9" r="7.500" fill="#d8651c"/><path d="M9 4a5 5 0 0 1 4 6c-1 3-5 4-7 2 2 0 4 0 4-3 0-2-1-3-1-5z" fill="#2a4a9a"/><path d="M3 7c0-3 3-5 6-5-2 1-3 2-3 4z" fill="#f4c040"/></svg>
<div class="t" style="left:142px;top:746px;color:#fff;font-size:10.800px">Ofertas de empleo - ...</div>
<div class="a" style="left:272px;top:741px;width:160px;height:26px;background:linear-gradient(#1a48b0,#1e50bc 60%,#2358c8);border-radius:3px"></div>
<svg style="left:282px;top:745px" width="17" height="17"><rect width="15" height="15" rx="2" fill="#0e6e72"/><circle cx="7.500" cy="7.500" r="5" fill="none" stroke="#cfe" stroke-width="2"/><circle cx="7.500" cy="7.500" r="1.500" fill="#cfe"/></svg>
<div class="t" style="left:303px;top:747px;color:#fff;font-size:10.800px">Copia de Estudio1.ma...</div>
<div class="a" style="left:433px;top:741px;width:157px;height:26px;background:linear-gradient(#3e86f0,#3a7eec 60%,#2f6fe0);border-radius:3px"></div>
<svg style="left:442px;top:746px" width="17" height="15"><path d="M1 3h6l1 2h7v9H1z" fill="#f4d060" stroke="#b89030" stroke-width=".8"/></svg>
<div class="t" style="left:461px;top:747px;color:#fff;font-size:11px">A-19</div>
<div class="t" style="left:837px;top:747px;color:#fff;font-size:11.500px">ES</div>
<div class="a" style="left:870px;top:738px;width:154px;height:30px;background:linear-gradient(#0e7ce0,#16a0ee 10%,#1090e6 60%,#0c78d8 100%);border-left:1px solid #123a9a"></div>
<svg style="left:860px;top:742px" width="120" height="24"><circle cx="11" cy="12" r="9" fill="#6ab0f4" stroke="#dff" stroke-width="1"/><path d="M13 7l-5 5 5 5" stroke="#fff" stroke-width="2.500" fill="none"/>
<circle cx="27" cy="8" r="2.500" fill="#def"/><path d="M24 12h6v9h-6z" fill="#cde"/><rect x="30" y="15" width="6" height="6" fill="#4d4" stroke="#161"/>
<rect x="40" y="5" width="14" height="15" rx="2" fill="#e83020"/><circle cx="47" cy="12.500" r="4.500" fill="#f8d0a0"/><circle cx="47" cy="12.500" r="2" fill="#c81"/>
<circle cx="64" cy="11" r="6.500" fill="#667"/><circle cx="64" cy="11" r="2" fill="#ccd"/><path d="M67 18l5-5" stroke="#8ae"/>
<path d="M80 5a3 3 0 1 1 0 6a3 3 0 1 1 0-6zM76 21c0-5 2-9 5-9l3 2-2 7zM85 8l6 13H79z" fill="#e8c040"/><path d="M85 13v4" stroke="#111" stroke-width="1.500"/>
</svg>
<div class="t" style="left:958px;top:747px;color:#fff;font-size:11px">08:56 p.m.</div>
</body></html>
